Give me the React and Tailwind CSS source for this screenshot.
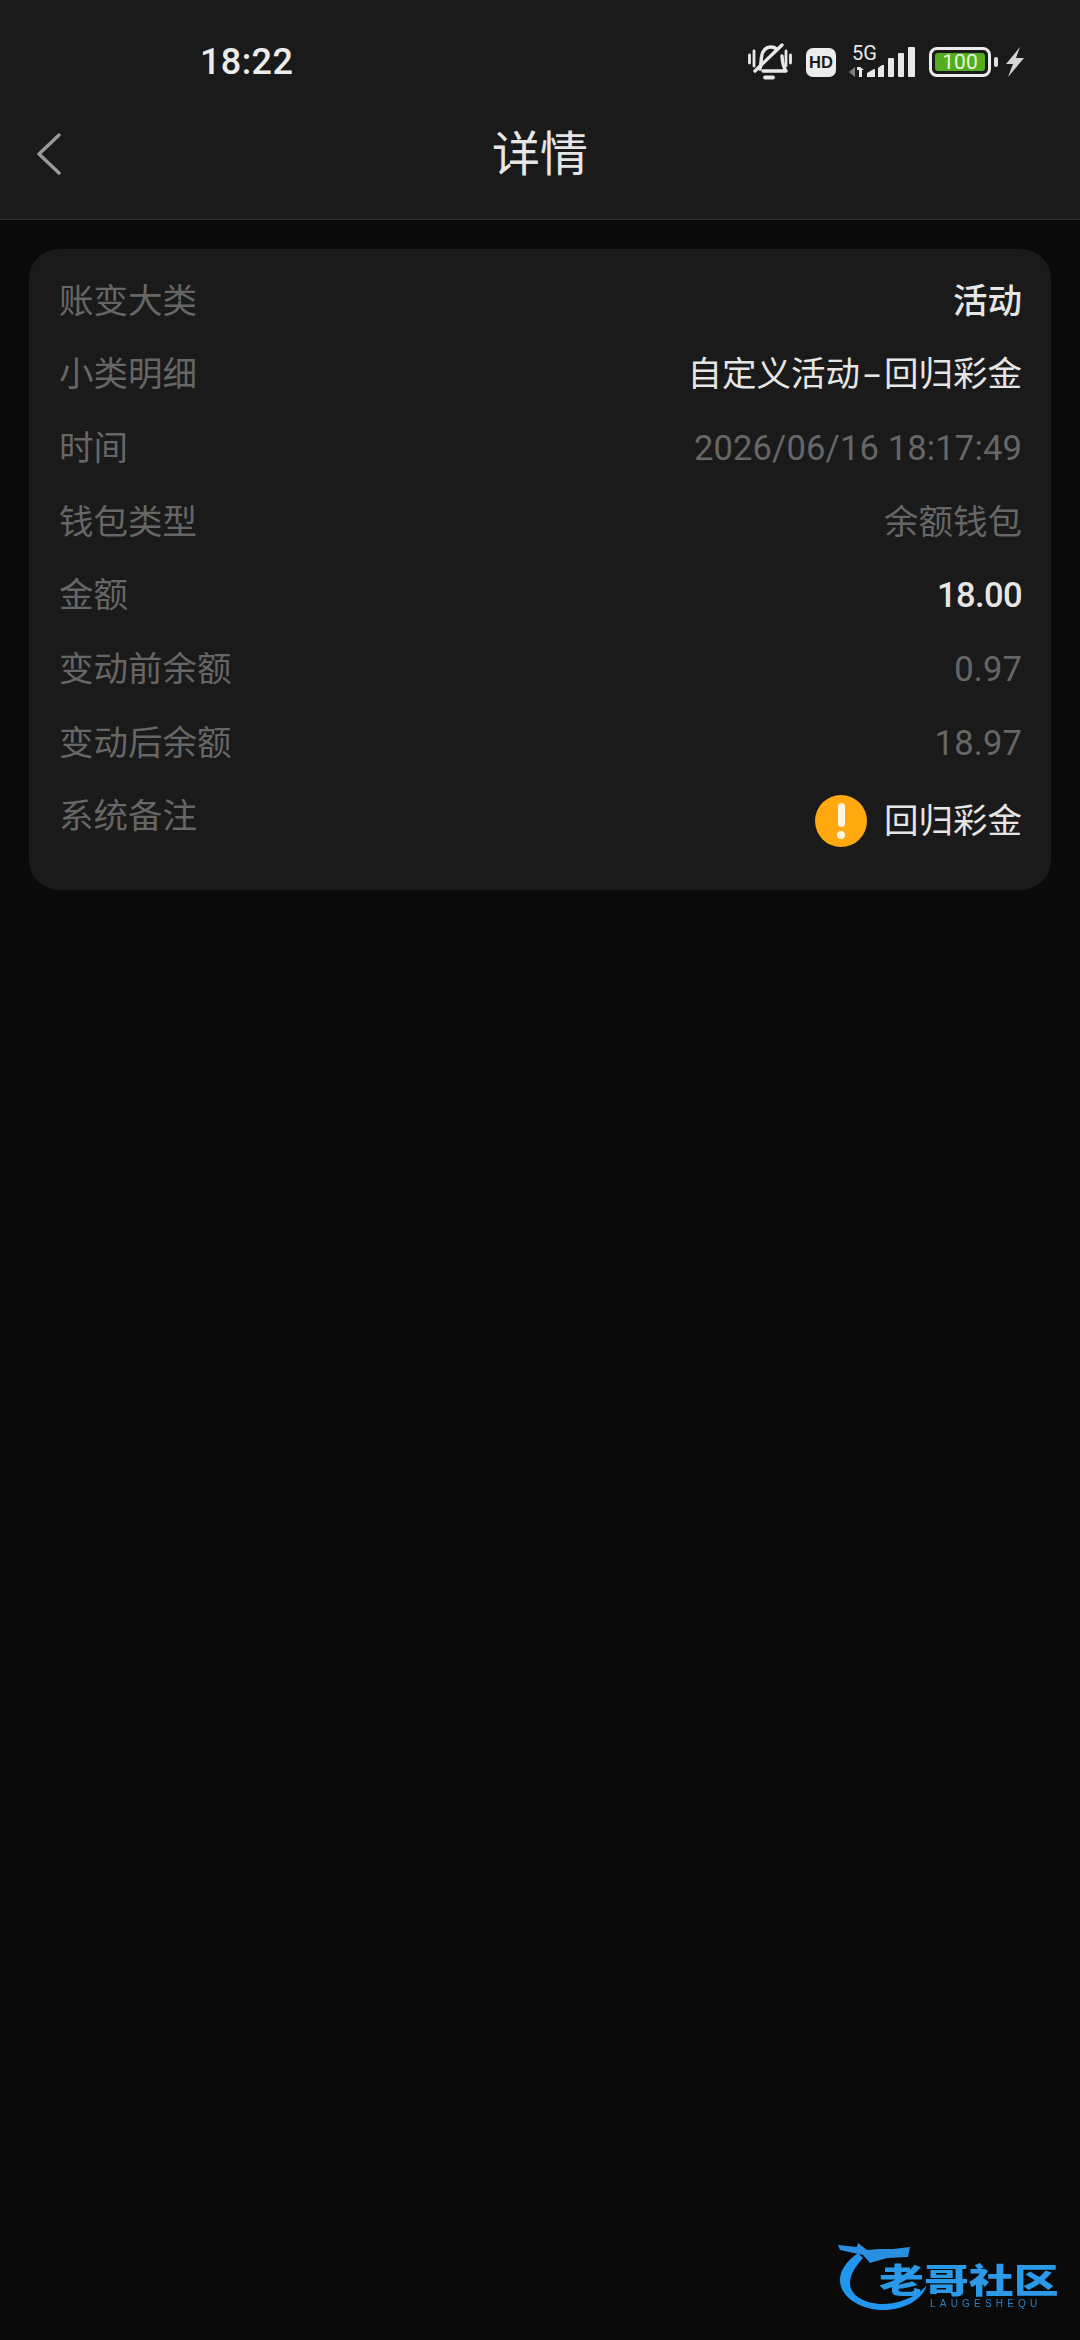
const cjk = '"Noto Sans CJK SC", sans-serif';
const mixed = 'Roboto, "Noto Sans CJK SC", sans-serif';

const rows = [
  ["账变大类", ["活动"], "text-[#e6e6e6] font-medium"],
  ["小类明细", ["自定义活动", "-", "回归彩金"], "text-[#e6e6e6]"],
  ["时间", ["2026/06/16 18:17:49"], "text-[#666666] tracking-[0.15px]"],
  ["钱包类型", ["余额钱包"], "text-[#666666]"],
  ["金额", ["18.00"], "text-[#e6e6e6] font-medium tracking-[-0.6px]"],
  ["变动前余额", ["0.97"], "text-[#666666] tracking-[0.15px]"],
  ["变动后余额", ["18.97"], "text-[#666666] tracking-[0.15px]"],
];

function Bell() {
  return (
    <svg width="44" height="38" viewBox="0 0 44 38" fill="none" stroke="#e8e8e8" strokeWidth="3.400" strokeLinecap="round" strokeLinejoin="round">
      <path d="M1.500 12v8M6 8v15M38 8v15M42.500 12v8" strokeWidth="2.800" />
      <path d="M12 26c1-4 1-8 1.500-12C14 8 18 4 23 4c2 0 4 .6 5.500 2M34 13c.3 5 1 11 4 15H15" />
      <path d="M7 28 34 2" />
      <path d="M17 34.500h8" strokeWidth="3.800" />
    </svg>
  );
}

function Signal() {
  return (
    <svg width="66" height="31" viewBox="0 0 66 31" fill="#e8e8e8">
      <path d="M6 20 0 25l6 5z" fill="#808080" />
      <path d="M8 20h3l4 3h-2v7H10v-7H8z" />
      <path d="M18 30v-4l7-4h1v8z" />
      <path d="M29 30v-9l4-3h2v12z" />
      <rect x="39" y="11" width="6" height="19" rx="1" />
      <rect x="49" y="6" width="6" height="24" rx="1" />
      <rect x="59" y="0" width="7" height="30" rx="1" />
    </svg>
  );
}

function Bolt() {
  return (
    <svg width="20" height="30" viewBox="0 0 20 30" fill="#d4d4d4">
      <path d="M15 0 1 17h7L3 30 19 11h-8z" />
    </svg>
  );
}

function Watermark() {
  return (
    <div className="absolute left-[838px] top-[2240px] w-[226px] h-[76px] blur-[0.7px]">
      <svg className="absolute left-0 top-0" width="226" height="76" viewBox="0 0 226 76" fill="none">
        <path d="M20 13C8 22 2 30 2 40 2 58 24 70 45 70 66 70 84 60 89 45 84 52 66 64 45 64 26 64 12 55 12 43 12 34 18 26 25 18z" fill="#2196ee" />
        <path d="M0 5l19 2 1-4 9 7 12-1 14 0 17-2-2 10-21 1-17 5-7-8-23-5z" fill="#2a8fe0" />
      </svg>
      <div className="absolute left-[41px] top-[22px] text-[34px] leading-[34px] font-black text-[#2a9ae8] whitespace-nowrap origin-left scale-x-[1.32]" style={{ fontFamily: cjk }}>老哥社区</div>
      <div className="absolute left-[92px] top-[58px] text-[10px] leading-[11px] tracking-[4.2px] text-[#2a7fc4] whitespace-nowrap font-['Liberation_Sans']">LAUGESHEQU</div>
    </div>
  );
}

export default function App() {
  return (
    <div className="relative w-[1080px] h-[2340px] overflow-hidden bg-[#0a0a0a]" style={{ fontFamily: mixed }}>
      <header className="h-[220px] bg-[#1a1a1a] border-b border-[#2c2c2c] flex flex-col">
        <div className="h-[108px] flex items-center pl-[200px] pr-[54px] pt-[16px] shrink-0">
          <span className="text-[36px] leading-none font-medium text-[#ececec] tracking-[0.4px]">18:22</span>
          <div className="ml-auto flex items-center">
            <Bell />
            <div className="ml-[14px] w-[30px] h-[29px] rounded-[7px] bg-[#ececec] flex items-center justify-center text-[16.500px] font-black text-[#1a1a1a] font-['Liberation_Sans']">HD</div>
            <div className="ml-[13px] relative w-[66px] h-[31px]">
              <div className="absolute left-[3px] -top-[3px] text-[20px] leading-[18px] text-[#e8e8e8]">5G</div>
              <Signal />
            </div>
            <div className="ml-[14px] w-[62px] h-[30px] rounded-[8px] border-[3px] border-[#ececec] p-[3px] flex">
              <div className="flex-1 rounded-[3px] bg-[#52ae1f] flex items-center justify-center text-[21px] leading-none text-[#e8f5dc]">100</div>
            </div>
            <div className="ml-[3px] w-[4px] h-[10px] rounded-full bg-[#e0e0e0]" />
            <div className="ml-[7px] mr-[1px]"><Bolt /></div>
          </div>
        </div>
        <div className="relative flex-1 flex items-center justify-center pb-[17px]">
          <svg className="absolute left-[36px] top-[25px]" width="26" height="42" viewBox="0 0 26 42" fill="none" stroke="#999999" strokeWidth="3.400" strokeLinecap="round" strokeLinejoin="round">
            <path d="M23 2 3 21l20 19" />
          </svg>
          <h1 className="text-[48px] leading-none font-normal text-[#e6e6e6]">详情</h1>
        </div>
      </header>

      <main className="pt-[29px] px-[29px]">
        <section className="rounded-[30px] bg-[#1a1a1a] pl-[30px] pr-[29px] pt-[15px] h-[641px]">
          {rows.map(([label, parts, cls]) => (
            <div key={label} className="h-[73.700px] flex items-center justify-between text-[34.500px] leading-none">
              <span className="text-[#666666]">{label}</span>
              <span className={cls}>
                {parts.map((p) =>
                  p === "-" ? (
                    <span key={p} className="inline-block w-[24px] text-center scale-x-[1.8]">{p}</span>
                  ) : (
                    <span key={p}>{p}</span>
                  )
                )}
              </span>
            </div>
          ))}
          <div className="h-[73.700px] flex items-start justify-between text-[34.500px] leading-none">
            <span className="text-[#666666] mt-[19px]">系统备注</span>
            <div className="flex items-center gap-[17px] mt-[15px]">
              <div className="w-[52px] h-[52px] rounded-full bg-[#ffa80f] flex flex-col items-center justify-center gap-[4px]">
                <div className="w-[7px] h-[24px] rounded-full bg-[#fff6e0]" />
                <div className="w-[8px] h-[8px] rounded-full bg-[#fff6e0]" />
              </div>
              <span className="text-[#e6e6e6]">回归彩金</span>
            </div>
          </div>
        </section>
      </main>
      <Watermark />
    </div>
  );
}
